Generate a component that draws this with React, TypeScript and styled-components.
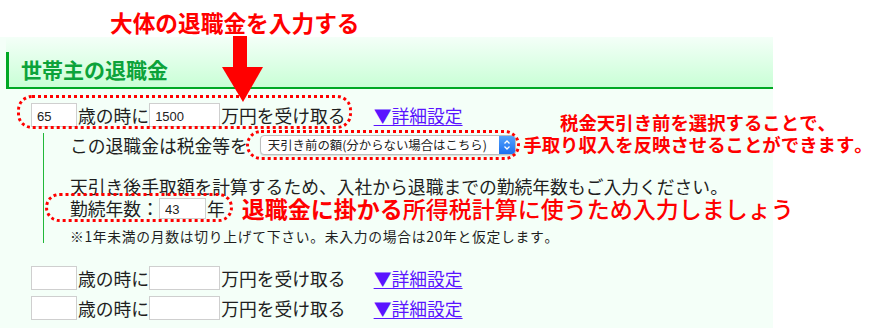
import React from 'react';
import styled, { createGlobalStyle } from 'styled-components';

const GlobalStyle = createGlobalStyle`
  html, body {
    margin: 0;
    padding: 0;
    background: #ffffff;
  }
  body {
    font-family: "Noto Sans CJK JP", "Noto Sans", sans-serif;
    font-kerning: none;
    text-spacing-trim: space-all;
    color: #1e1e1e;
  }
`;

const Page = styled.div`
  position: relative;
  width: 880px;
  height: 328px;
  overflow: hidden;
`;

const TopNote = styled.div`
  box-sizing: border-box;
  height: 37px;
  padding: 8px 0 0 110px;
  font-size: 22.7px;
  font-weight: 700;
  line-height: 30px;
  color: #ff0000;
`;

const Arrow = styled.svg`
  position: absolute;
  left: 222px;
  top: 36px;
`;

const Panel = styled.div`
  width: 773px;
  height: 291px;
  background: #f4fff8;
`;

const Header = styled.div`
  box-sizing: border-box;
  margin-left: 6px;
  height: 52px;
  padding-top: 15px;
  border-bottom: 2px solid #00a824;
  background: linear-gradient(#f4fff8, #c9ffd6);
`;

const HeaderTitle = styled.h2`
  margin: 0;
  height: 35px;
  border-left: 3px solid #00a824;
  padding-left: 12px;
  font-size: 21px;
  font-weight: 700;
  line-height: 35px;
  color: #0ca33a;
`;

const Row = styled.div<{ $top: number; $h: number; $pad?: number }>`
  display: flex;
  align-items: center;
  white-space: nowrap;
  margin-top: ${(p) => p.$top}px;
  height: ${(p) => p.$h}px;
  padding-left: ${(p) => p.$pad ?? 0}px;
  font-size: 17.8px;
  line-height: ${(p) => p.$h}px;
`;

const Sub = styled.div`
  margin-left: 43px;
  border-left: 1px solid #22b83a;
  padding-left: 26px;
`;

const Marked = styled.span<{ $t: number; $r: number; $b: number; $l: number }>`
  position: relative;
  display: inline-flex;
  align-items: center;

  &::after {
    content: '';
    position: absolute;
    top: ${(p) => p.$t}px;
    right: ${(p) => p.$r}px;
    bottom: ${(p) => p.$b}px;
    left: ${(p) => p.$l}px;
    border: 3px dotted #ff0000;
    border-radius: 15px;
    pointer-events: none;
  }
`;

const NumInput = styled.input<{ $w: number; $h?: number }>`
  box-sizing: border-box;
  width: ${(p) => p.$w}px;
  height: ${(p) => p.$h ?? 24}px;
  margin: 0 1px 0 0;
  padding: 2px 0 0 5px;
  border: 1px solid #cfcfcf;
  background: #ffffff;
  font-family: "Liberation Sans", Arial, sans-serif;
  font-size: 13px;
  color: #222;
  outline: none;
`;

const Label = styled.span`
  display: inline-block;
`;

const DetailLink = styled.a`
  margin-left: 28px;
  color: #5a14ff;
  text-decoration: underline;
  text-underline-offset: 2px;
  cursor: pointer;
`;

const SelectBox = styled.span`
  position: relative;
  display: inline-flex;
  box-sizing: border-box;
  width: 256px;
  height: 20px;
  border: 1px solid #bdbdbd;
  border-radius: 4px;
  background: #ffffff;
  box-shadow: 0 1px 1px rgba(0, 0, 0, 0.12);
  overflow: hidden;
`;

const Select = styled.select`
  appearance: none;
  flex: 1;
  height: 100%;
  border: none;
  background: transparent;
  padding: 0 0 0 7px;
  font-family: "Noto Sans CJK JP", sans-serif;
  font-size: 12.4px;
  color: #222;
  outline: none;
`;

const Stepper = styled.span`
  display: flex;
  align-items: center;
  justify-content: center;
  width: 16px;
  height: 100%;
  background: linear-gradient(#55a3fb, #1b6ff0);
`;

const RedNote = styled.span`
  margin-left: 17px;
  font-size: 23px;
  font-weight: 500;
  line-height: 22px;
  color: #ff0000;

  b {
    font-weight: 700;
  }
`;

const SmallNote = styled.div`
  margin-top: 10px;
  height: 14px;
  font-size: 13.8px;
  letter-spacing: 0.7px;
  line-height: 14px;
  white-space: nowrap;
`;

const SideNote = styled.div`
  position: absolute;
  left: 523px;
  top: 111px;
  width: 350px;
  text-align: center;
  font-size: 18.4px;
  font-weight: 700;
  line-height: 22px;
  color: #ff0000;
  white-space: nowrap;
`;

function PaymentRow({ top, age, amount }: { top: number; age?: string; amount?: string }) {
  return (
    <Row $top={top} $h={24} $pad={31}>
      <NumInput $w={46} defaultValue={age} />
      <Label>歳の時に</Label>
      <NumInput $w={71} defaultValue={amount} />
      <Label>万円を受け取る</Label>
      <DetailLink>▼詳細設定</DetailLink>
    </Row>
  );
}

export default function App() {
  return (
    <Page>
      <GlobalStyle />
      <TopNote>大体の退職金を入力する</TopNote>
      <Panel>
        <Header>
          <HeaderTitle>世帯主の退職金</HeaderTitle>
        </Header>

        <Row $top={14} $h={24} $pad={31}>
          <Marked $t={-8} $r={-6} $b={-2} $l={-14}>
            <NumInput $w={46} defaultValue="65" />
            <Label>歳の時に</Label>
            <NumInput $w={71} defaultValue="1500" />
            <Label>万円を受け取る</Label>
          </Marked>
          <DetailLink>▼詳細設定</DetailLink>
        </Row>

        <Sub>
          <Row $top={6} $h={24}>
            <Label>この退職金は税金等を</Label>
            <Marked $t={-5} $r={-4} $b={-5} $l={-14} style={{ marginLeft: 12 }}>
              <SelectBox>
                <Select defaultValue="gross">
                  <option value="gross">天引き前の額(分からない場合はこちら)</option>
                  <option value="net">天引き後の額</option>
                </Select>
                <Stepper>
                  <svg width="8" height="12" viewBox="0 0 8 12">
                    <path d="M1.5 4.5 L4 2 L6.5 4.5 M1.5 7.5 L4 10 L6.5 7.5" fill="none" stroke="#fff" strokeWidth="1.3" />
                  </svg>
                </Stepper>
              </SelectBox>
            </Marked>
          </Row>

          <Row $top={19} $h={21}>
            天引き後手取額を計算するため、入社から退職までの勤続年数もご入力ください。
          </Row>

          <Row $top={0} $h={22}>
            <Marked $t={-4} $r={-8} $b={-3} $l={-25}>
              <Label>勤続年数：</Label>
              <NumInput $w={47} $h={21} defaultValue="43" />
              <Label>年</Label>
            </Marked>
            <RedNote>
              <b>退職金に掛かる</b>所得税計算に使うため入力しましょう
            </RedNote>
          </Row>

          <SmallNote>※1年未満の月数は切り上げて下さい。未入力の場合は20年と仮定します。</SmallNote>
        </Sub>

        <PaymentRow top={23} />
        <PaymentRow top={6} />
      </Panel>

      <Arrow width="42" height="66" viewBox="0 0 42 66">
        <rect x="11" y="0" width="14" height="32" fill="#ff0000" />
        <polygon points="0,31 41,31 21,66" fill="#ff0000" />
      </Arrow>

      <SideNote>
        税金天引き前を選択することで、
        <br />
        手取り収入を反映させることができます。
      </SideNote>
    </Page>
  );
}
